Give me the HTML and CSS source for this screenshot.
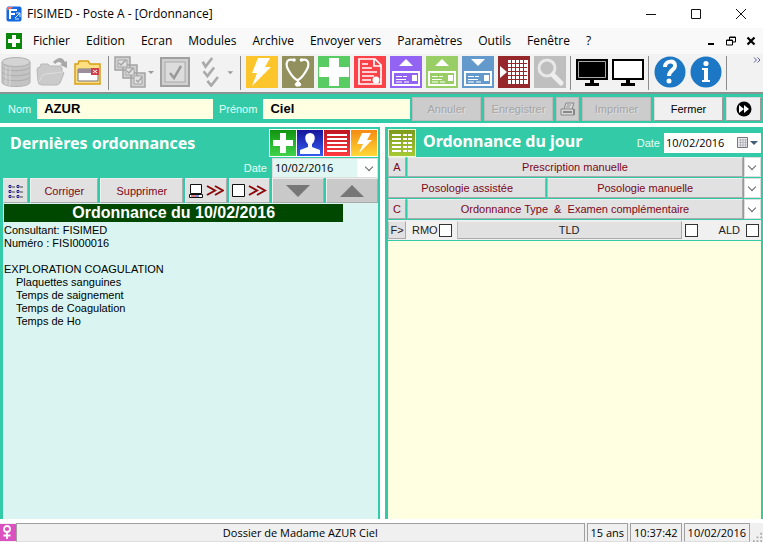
FILE: index.html
```html
<!DOCTYPE html>
<html lang="fr">
<head>
<meta charset="utf-8">
<title>FISIMED - Poste A - [Ordonnance]</title>
<link rel="stylesheet" href="styles.css">
</head>
<body>
<header class="titlebar">
  <svg class="app-icon" viewBox="0 0 16 16"><rect width="15" height="15" x=".5" y=".5" rx="2" fill="#1468e0"/><path d="M1 1h6L4 4H1z" fill="#ef6b6b"/><path d="M4 13V4h7M4 8h5" fill="none" stroke="#fff" stroke-width="2"/><path d="M9 12l5-5M10 7h4v4M9 13h4" fill="none" stroke="#d5e8ff"/></svg>
  <h1 class="window-title">FISIMED - Poste A - [Ordonnance]</h1>
  <div class="window-controls">
    <button aria-label="Réduire"><svg viewBox="0 0 12 12"><path d="M1 6.500h10"/></svg></button>
    <button aria-label="Agrandir"><svg viewBox="0 0 12 12"><path d="M1.500 1.500h9v9h-9z"/></svg></button>
    <button aria-label="Fermer la fenêtre"><svg viewBox="0 0 12 12"><path d="M1 1l10 10M11 1L1 11"/></svg></button>
  </div>
</header>
<nav class="menubar">
  <svg class="cross-icon" viewBox="0 0 16 16"><rect width="16" height="16" fill="#0b870b"/><path d="M6 2h4v4h4v4h-4v4H6v-4H2V6h4z" fill="#fff"/></svg>
  <button>Fichier</button><button>Edition</button><button>Ecran</button><button>Modules</button><button>Archive</button><button>Envoyer vers</button><button>Paramètres</button><button>Outils</button><button>Fenêtre</button><button>?</button>
  <div class="child-controls">
    <button aria-label="Réduire le document"><svg viewBox="0 0 10 10"><path d="M2 8h6" stroke-width="2"/></svg></button>
    <button aria-label="Restaurer le document"><svg viewBox="0 0 10 10"><path d="M3.500 4V1h6v5H7M3 1.500h7M.5 4h6v5h-6zM0 4.500h7"/></svg></button>
    <button aria-label="Fermer le document"><svg viewBox="0 0 10 10"><path d="M1.500 1.500l7 7M8.500 1.500l-7 7" stroke-width="2.200"/></svg></button>
  </div>
</nav>
<div class="toolbar" role="toolbar" aria-label="Outils">
  <button class="tool" aria-label="Base de données"><svg viewBox="0 0 32 32"><path d="M2 6v20c0 6 28 6 28 0V6" fill="#c4c4c4" stroke="#b0b0b0"/><ellipse cx="16" cy="6" rx="14" ry="4.500" fill="#d4d4d4" stroke="#b0b0b0"/><path d="M2 11c2 5 26 5 28 0M2 16c2 5 26 5 28 0M2 21c2 5 26 5 28 0" fill="none" stroke="#acacac"/><path d="M6 11v18M10 12v18" stroke="#dadada"/></svg></button>
  <button class="tool" aria-label="Ouvrir"><svg viewBox="0 0 32 32"><path d="M1 14q0-3 3-3l1-3h7l2 2h10q3 1 2 5l2 2-4 10q-1 2-4 2H6q-4 0-4-4z" fill="#cbcbcb" stroke="#b8b8b8"/><path d="M3 26q2-7 6-8l18-2" fill="none" stroke="#dedede"/><path d="M17 6q8-8 12 0l2-1v7l-7-3 2-1q-3-4-7 0z" fill="#a8a8a8"/></svg></button>
  <button class="tool" aria-label="Fermer le dossier"><svg viewBox="0 0 32 32"><path d="M3 28V8h3l1-3h9l2 3h10v20z" fill="#ffdf80" stroke="#d8a019" stroke-width="1.500"/><path d="M6 13h20v12H6z" fill="#fff" stroke="#777"/><path d="M6 13h13v4H6z" fill="#9d8c9c"/><path d="M19 12h8v7h-8z" fill="#d2404a"/><path d="M21 14l4 3M25 14l-4 3" stroke="#fff"/></svg></button>
  <span class="sep"></span>
  <button class="tool wide" aria-label="Sélection multiple"><svg viewBox="0 0 42 32"><g fill="#d1d1d1" stroke="#a4a4a4" stroke-width="1.500"><path d="M1 1h15v13H1zM9 9h14v13H9zM17 17h14v14H17z"/><path d="M4 4h9v7H4zM12 12h8v7h-8zM20 20h8v8h-8z" fill="#e2e2e2" stroke-width="1"/><path d="M5 7l2 2 5-5M13 15l2 2 4-5M22 24l2 2 4-5" fill="none"/></g><path d="M34 15h6l-3 3z" fill="#999"/></svg></button>
  <button class="tool" aria-label="Cocher"><svg viewBox="0 0 32 32"><rect x="1" y="2" width="28" height="28" fill="#d0d0d0" stroke="#a0a0a0" stroke-width="2"/><rect x="5" y="6" width="20" height="20" fill="#dcdcdc" stroke="#aaa"/><path d="M10 17l4 5 7-12" fill="none" stroke="#999" stroke-width="2.500"/></svg></button>
  <button class="tool wide" aria-label="Tout cocher"><svg viewBox="0 0 42 32"><path d="M7 5l3 5 7-9M8 15l4 5 7-9M12 25l4 5 7-9" fill="none" stroke="#aaa" stroke-width="2.800"/><path d="M33 15h6l-3 3z" fill="#999"/></svg></button>
  <span class="sep"></span>
  <button class="tool" aria-label="Urgence"><svg viewBox="0 0 32 32"><rect width="32" height="32" fill="#fdc52c"/><path d="M12 2h12l-5 9h6L6 30l5-13H6z" fill="#fff"/></svg></button>
  <button class="tool" aria-label="Consultation"><svg viewBox="0 0 32 32"><rect width="32" height="32" fill="#92915e"/><path d="M11 4C4 2 3 9 7 15q4 7 8 9h1q4-2 8-9c4-6 3-13-4-11M16 23v4" fill="none" stroke="#fff" stroke-width="2.200"/><circle cx="12" cy="4" r="1.800" fill="#fff"/><circle cx="19.500" cy="4" r="1.800" fill="#fff"/><path d="M16 25l3 3-1 2h-4l-1-2z" fill="#fff" stroke="#fff"/></svg></button>
  <button class="tool" aria-label="Nouveau dossier"><svg viewBox="0 0 32 32"><rect width="32" height="32" fill="#58cb63"/><path d="M11 2h10v9h10v10H21v9H11v-9H1V11h10z" fill="#fff"/></svg></button>
  <button class="tool" aria-label="Ordonnance"><svg viewBox="0 0 32 32"><rect width="32" height="32" fill="#fb4248"/><path d="M5 3h16l6 6v19H5zM20 3v7h7M8 8h6M8 12h10M8 16h15M8 20h12M8 24h9" fill="none" stroke="#fff" stroke-width="1.700"/><circle cx="22" cy="24" r="3.500" fill="#fff"/></svg></button>
  <button class="tool" aria-label="Carte haut"><svg viewBox="0 0 32 32"><rect width="32" height="32" fill="#9363f4"/><path d="M9 10l7-7 7 7z" fill="#fff"/><path d="M3 16h26v13H3z" fill="none" stroke="#fff" stroke-width="2"/><path d="M6 20.500h6m1 0h4M6 23.500h10M6 26h6m2 0h5" stroke="#fff" stroke-width="1.200"/><path d="M22 19h5v6h-5z" fill="#fff"/></svg></button>
  <button class="tool" aria-label="Carte verte"><svg viewBox="0 0 32 32"><rect width="32" height="32" fill="#99ce66"/><path d="M9 10l7-7 7 7z" fill="#fff"/><path d="M3 16h26v13H3z" fill="none" stroke="#fff" stroke-width="2"/><path d="M6 20.500h6m1 0h4M6 23.500h10M6 26h6m2 0h5" stroke="#fff" stroke-width="1.200"/><path d="M22 19h5v6h-5z" fill="#fff"/></svg></button>
  <button class="tool" aria-label="Carte bas"><svg viewBox="0 0 32 32"><rect width="32" height="32" fill="#639acb"/><path d="M9 3l7 7 7-7z" fill="#fff"/><path d="M3 16h26v13H3z" fill="none" stroke="#fff" stroke-width="2"/><path d="M6 20.500h6m1 0h4M6 23.500h10M6 26h6m2 0h5" stroke="#fff" stroke-width="1.200"/><path d="M22 19h5v6h-5z" fill="#fff"/></svg></button>
  <button class="tool" aria-label="Tableau"><svg viewBox="0 0 32 32"><rect width="32" height="32" fill="#96282b"/><path d="M2 10l7 6-7 6z" fill="#fff"/><path d="M10 4h20v24H10z" fill="#fff"/><path d="M13.500 4v24M17.500 4v24M21.500 4v24M25.500 4v24M10 7.500h19M10 11.500h19M10 15.500h19M10 19.500h19M10 23.500h19" stroke="#96282b"/></svg></button>
  <button class="tool" aria-label="Rechercher"><svg viewBox="0 0 32 32"><rect width="32" height="32" fill="#bfbfbf"/><circle cx="13" cy="12" r="8" fill="none" stroke="#e8e8e8" stroke-width="3"/><path d="M19 19l8 8" stroke="#eee" stroke-width="5" stroke-linecap="round"/></svg></button>
  <span class="sep"></span>
  <button class="tool" aria-label="Ecran noir"><svg viewBox="0 0 32 32"><path d="M0 3h32v21H0zM14 24h4v3h5v3H9v-3h5z"/><path d="M2.500 5.500h27v16h-27z" fill="none" stroke="#aaa"/></svg></button>
  <button class="tool" aria-label="Ecran blanc"><svg viewBox="0 0 32 32"><path d="M0 3h32v21H0zM14 24h4v3h5v3H9v-3h5z"/><path d="M2 5h28v17H2z" fill="#fff"/></svg></button>
  <span class="sep"></span>
  <button class="tool" aria-label="Aide"><svg viewBox="0 0 32 32"><circle cx="16" cy="16" r="15.500" fill="#1c77c4"/><path d="M11 11c0-7 11-7 10-1 0 4-6 4-6 10" fill="none" stroke="#fff" stroke-width="4"/><circle cx="15" cy="25" r="2.500" fill="#fff"/></svg></button>
  <button class="tool" aria-label="Informations"><svg viewBox="0 0 32 32"><circle cx="16" cy="16" r="15.500" fill="#1c77c4"/><circle cx="16" cy="7.500" r="2.600" fill="#fff"/><path d="M12 12h6v12h2v2h-8v-2h2V14h-2z" fill="#fff"/></svg></button>
  <span class="sep"></span>
  <button class="more" aria-label="Autres outils"><svg viewBox="0 0 8 6"><path d="M1 .5L3.500 3 1 5.500M4.500.5L7 3 4.500 5.500" fill="none" stroke="#5a5a9c"/></svg></button>
</div>

<form class="patient">
  <label for="nom">Nom</label><input id="nom" class="nom" value="AZUR">
  <label for="prenom">Prénom</label><input id="prenom" class="prenom" value="Ciel">
  <div class="actions">
    <button type="button" disabled>Annuler</button>
    <button type="button" disabled>Enregistrer</button>
    <button type="button" class="square" disabled aria-label="Aperçu"><svg viewBox="0 0 16 16"><path d="M1 8h13v6H1zM4 8l2-6h8l-2 6" fill="#d8d8d8" stroke="#888"/><path d="M3 11h9M14 8v6" stroke="#888" stroke-width="2"/><path d="M7 4h4M6 6h4" stroke="#999"/></svg></button>
    <button type="button" disabled>Imprimer</button>
    <button type="button">Fermer</button>
    <button type="button" class="next" aria-label="Suivant"><svg viewBox="0 0 16 16"><circle cx="8" cy="8" r="7.500"/><path d="M3 4l5 4-5 4zM8 4l5 4-5 4z" fill="#fff"/></svg></button>
  </div>
</form>

<main class="panels">
  <section class="panel">
    <div class="head">
      <h2>Dernières ordonnances</h2>
      <div class="quick">
        <button aria-label="Ajouter"><svg viewBox="0 0 26 26"><defs><linearGradient id="g1" x2="0" y2="1"><stop stop-color="#109410"/><stop offset="1" stop-color="#42d34b"/></linearGradient></defs><rect width="26" height="26" fill="url(#g1)"/><path d="M10 3h6v7h7v6h-7v7h-6v-7H3v-6h7z" fill="#fff"/></svg></button>
        <button aria-label="Patient"><svg viewBox="0 0 26 26"><defs><linearGradient id="g2" x2="0" y2="1"><stop stop-color="#15159b"/><stop offset="1" stop-color="#375df0"/></linearGradient></defs><rect width="26" height="26" fill="url(#g2)"/><path d="M13 3c7 0 5 9 2 11v3l8 3v4H3v-4l8-3v-3C8 12 6 3 13 3z" fill="#fff"/></svg></button>
        <button aria-label="Liste"><svg viewBox="0 0 26 26"><defs><linearGradient id="g3" x2="0" y2="1"><stop stop-color="#bd1520"/><stop offset="1" stop-color="#ff3b40"/></linearGradient></defs><rect width="26" height="26" fill="url(#g3)"/><path d="M3 5h20M3 9h20M3 13h20M3 17h20M3 21h20" stroke="#fff" stroke-width="2"/></svg></button>
        <button aria-label="Rapide"><svg viewBox="0 0 26 26"><defs><linearGradient id="g4" x2="0" y2="1"><stop stop-color="#f48b12"/><stop offset="1" stop-color="#ffd837"/></linearGradient></defs><rect width="26" height="26" fill="url(#g4)"/><path d="M11 3h9l-4 7h5L8 23l4-9H6z" fill="#fff"/></svg></button>
      </div>
    </div>
    <div class="date-row">
      <label for="date-prec">Date</label>
      <span class="drop date-drop"><select id="date-prec"><option>10/02/2016</option></select></span>
    </div>
    <div class="commands">
      <button class="c-list" aria-label="Options"><svg viewBox="0 0 16 14"><path d="M1 1.500h2v2H1zM9 1.500h2v2H9zM1 6.500h2v2H1zM9 6.500h2v2H9zM1 11.500h2v2H1zM9 11.500h2v2H9z" fill="none" stroke="#20208c"/><path d="M4 3h3M12 3h3M4 8h3M12 8h3M4 13h3M12 13h3" stroke="#444"/></svg></button>
      <button class="c-edit">Corriger</button>
      <button class="c-del">Supprimer</button>
      <button class="c-send" aria-label="Transférer vers le poste"><svg viewBox="0 0 36 16"><path d="M2.500 1.500h11v9h-11zM1.500 11.500h13v3h-13z" fill="#fff" stroke="#111"/><path d="M3 13h4" stroke="#c00"/><path d="M7 13h4" stroke="#22a"/><path d="M19 3l8 4.500-8 4.500M27 3l8 4.500-8 4.500" fill="none" stroke="#8b0c0c" stroke-width="2"/></svg></button>
      <button class="c-send" aria-label="Transférer"><svg viewBox="0 0 36 16"><path d="M1.500 1.500h12v12h-12z" fill="#fff" stroke="#111"/><path d="M18 3l8 4.500-8 4.500M26 3l8 4.500-8 4.500" fill="none" stroke="#8b0c0c" stroke-width="2"/></svg></button>
      <button class="c-move" aria-label="Descendre"><svg viewBox="0 0 24 12"><path d="M0 0h24L12 12z" fill="#777"/></svg></button>
      <button class="c-move" aria-label="Monter"><svg viewBox="0 0 24 12"><path d="M0 12h24L12 0z" fill="#777"/></svg></button>
    </div>
    <article class="document">
      <h3>Ordonnance du 10/02/2016</h3>
      <p>Consultant: FISIMED</p>
      <p>Numéro : FISI000016</p>
      <p class="exam">EXPLORATION COAGULATION</p>
      <ul><li>Plaquettes sanguines</li><li>Temps de saignement</li><li>Temps de Coagulation</li><li>Temps de Ho</li></ul>
    </article>
  </section>

  <section class="panel">
    <div class="head today">
      <button class="grid-btn" aria-label="Grille"><svg viewBox="0 0 28 28"><defs><linearGradient id="g5" x2="0" y2="1"><stop stop-color="#7d9b1c"/><stop offset="1" stop-color="#a6c935"/></linearGradient></defs><path d="M0 0h28v28H0z" fill="#f0f6d8"/><path d="M1 1h26v26H1z" fill="url(#g5)"/><path d="M4 6h9M4 10h9M4 14h9M4 18h9M4 22h9M15 6h4M15 10h4M15 14h4M15 18h4M15 22h4M20 6h4M20 10h4M20 14h4M20 18h4M20 22h4" stroke="#fff" stroke-width="2"/></svg></button>
      <h2>Ordonnance du jour</h2>
      <label for="date-jour">Date</label>
      <div class="picker"><input id="date-jour" value="10/02/2016"><button aria-label="Calendrier"><svg viewBox="0 0 24 14"><path d="M.5 1.500h10v10H.5z" fill="#e8e8f0" stroke="#777"/><path d="M2 4h8M2 6.500h8M2 9h8M3.500 3v8M6 3v8M8.500 3v8" stroke="#aaa" stroke-width=".7"/><path d="M13 5h8l-4 4z" fill="#445e78"/></svg></button></div>
    </div>
    <div class="rows">
      <div class="row"><button class="letter">A</button><button class="grow">Prescription manuelle</button><span class="drop"><select aria-label="Prescriptions"><option value=""></option></select></span></div>
      <div class="row"><button class="posology">Posologie assistée</button><button class="grow">Posologie manuelle</button><span class="drop"><select aria-label="Posologies"><option value=""></option></select></span></div>
      <div class="row"><button class="letter">C</button><button class="grow">Ordonnance Type &nbsp;&amp;&nbsp; Examen complémentaire</button><span class="drop"><select aria-label="Ordonnances types"><option value=""></option></select></span></div>
      <div class="row checks">
        <button class="letter dark">F&gt;</button>
        <label for="rmo">RMO</label><input type="checkbox" id="rmo">
        <button class="grow dark">TLD</button><input type="checkbox" id="tld" aria-label="TLD">
        <label for="ald" class="ald">ALD</label><input type="checkbox" id="ald">
      </div>
    </div>
    <textarea class="editor" aria-label="Contenu de l'ordonnance"></textarea>
  </section>
</main>

<footer class="status">
  <svg class="gender" viewBox="0 0 16 17"><rect width="16" height="17" fill="#dc51c0"/><circle cx="7" cy="5" r="3" fill="none" stroke="#fff" stroke-width="1.800"/><path d="M7 8v7M3.500 11.500h7" stroke="#fff" stroke-width="1.800"/></svg>
  <span class="cell file">Dossier de Madame AZUR Ciel</span>
  <span class="cell">15 ans</span>
  <span class="cell">10:37:42</span>
  <span class="cell">10/02/2016</span>
  <svg class="grip" viewBox="0 0 12 12"><path d="M9 2h2v2H9zM5 6h2v2H5zM9 6h2v2H9zM1 10h2v2H1zM5 10h2v2H5zM9 10h2v2H9z" fill="#aaa"/></svg>
</footer>
</body>
</html>
```
FILE: styles.css
```css
:root {
  --teal: #33cba7;
  --face: #e1e1e1;
  --disabled: #cccccc;
  --maroon: #7b0820;
  --ui: "Open Sans", "Noto Sans", sans-serif;
  --form: "Liberation Sans", Arial, sans-serif;
}
* { box-sizing: border-box; }
body {
  margin: 0;
  min-height: 100vh;
  display: flex;
  flex-direction: column;
  background: #fff;
  color: #000;
  font: 12px/16px var(--ui);
}
h1, h2, h3, p, ul { margin: 0; padding: 0; list-style: none; }
button, input, select, textarea { font: inherit; color: inherit; margin: 0; border-radius: 0; }
button { padding: 0; border: 0; background: none; white-space: nowrap; }
svg { display: block; }

.titlebar { display: flex; align-items: center; height: 28px; padding-left: 6px; gap: 5px; }
.app-icon { width: 16px; height: 16px; }
.window-title { font-size: 12px; font-weight: 400; }
.window-controls { display: flex; margin-left: auto; }
.window-controls button { width: 45px; display: grid; place-items: center; }
.window-controls svg { width: 12px; fill: none; stroke: #111; }

.menubar { display: flex; align-items: center; height: 26px; gap: 16px; padding: 0 2px 0 6px; background: #f9f9f9; }
.cross-icon { width: 16px; height: 16px; margin-right: -5px; }
.child-controls { display: flex; margin-left: auto; }
.child-controls button { width: 20px; display: grid; place-items: center; }
.child-controls svg { width: 10px; fill: none; stroke: #000; }

.toolbar { display: flex; gap: 4px; height: 40px; padding-top: 2px; background: #f2f2f2; border-bottom: 2px solid #8a9390; overflow: hidden; }
.tool { width: 32px; height: 32px; flex: none; }
.tool.wide { width: 42px; }
.tool.wide:nth-of-type(6) { width: 40px; }
.sep { width: 2px; height: 34px; flex: none; border-left: 1px solid #8c8c8c; }
.more { margin-left: auto; width: 10px; height: 8px; }
.more svg { width: 8px; }

.patient { display: flex; align-items: center; gap: 6px; height: 29px; padding: 0 2px 0 8px; background: var(--teal); font: 11px/14px var(--form); }
.patient label, .date-row label, .today label { color: #e6fff6; font: 11px/14px var(--form); }
.patient input { height: 20px; min-width: 0; border: 0; padding: 0 7px; background: #ffffe1; font: bold 13px/16px var(--form); }
.nom { flex: 178 1 0; }
.prenom { flex: 146 1 0; }
.actions { display: flex; gap: 3px; margin-left: -4px; }
.actions button { width: 69px; height: 24px; background: #f0f0f0; border: 1px solid #d8d8d8; border-right-color: #999; border-bottom-color: #999; display: grid; place-items: center; }
.actions button:disabled { background: var(--disabled); color: #a5a5a5; border-color: #bababa; text-shadow: 1px 1px #dedede; }
.actions button.square { width: 23px; }
.actions button.next { width: 35px; }
.actions svg { width: 16px; }

.panels { flex: 1; display: grid; grid-template-columns: 380fr 378fr; gap: 5px; border: solid #fff; border-width: 4px 0; }
.panel { display: flex; flex-direction: column; min-width: 0; padding: 0 2px 0 3px; background: var(--teal); }
.head { display: flex; align-items: center; justify-content: space-between; height: 30px; padding: 2px 0 0 7px; }
.head h2 { color: #fff; font: bold 16px/20px "Noto Sans", "Open Sans", sans-serif; white-space: nowrap; }
.quick { display: flex; border: 1px solid #fff; background: #fff; gap: 1px; }
.quick button { width: 26px; height: 26px; }
.date-row { display: flex; justify-content: flex-end; align-items: center; gap: 5px; height: 21px; }
.drop { position: relative; display: block; background: #fff; flex: none; width: 17px; height: 20px; }
.drop::after { content: ""; position: absolute; right: 6px; top: 6px; width: 5px; height: 5px; border: solid #666; border-width: 0 1px 1px 0; transform: rotate(45deg); pointer-events: none; }
.drop select { appearance: none; display: block; width: 100%; height: 100%; border: 1px solid #ddd; background: transparent; padding: 0 2px; font-size: 11px; }
.date-drop { width: 106px; background: linear-gradient(90deg, #dff6f2 80%, #fff 80%); }
.commands { display: flex; gap: 2px; height: 25px; font: 11px/14px var(--form); color: var(--maroon); }
.commands button { display: grid; place-items: center; background: var(--face); border: 1px solid #eee; border-color: #eee #aaa #aaa #eee; }
.c-list { flex: 24 1 0; }
.c-edit { flex: 69 1 0; }
.c-del { flex: 84 1 0; }
.c-send { flex: 41 1 0; }
.commands .c-move { flex: 52 1 0; background: #c9c9c9; }
.c-list svg { width: 16px; }
.c-send svg { width: 36px; }
.c-move svg { width: 24px; }
.document { flex: 1; padding: 1px 1px 0; background: #daf5f1; font: 11px/13px var(--form); }
.document h3 { width: 91%; margin-bottom: 2px; background: #004700; color: #fff; font: bold 16px/18px var(--form); text-align: center; }
.exam { margin-top: 13px; }
.document ul { padding-left: 12px; }

.today { padding: 2px 0 0; gap: 7px; }
.grid-btn { width: 28px; height: 28px; }
.today h2 { margin: 0 auto 4px 0; }
.today label { margin-right: -3px; }
.picker { display: flex; width: 97px; height: 20px; background: #fff; align-items: center; }
.picker input { flex: 1; min-width: 0; border: 0; padding: 0 2px; background: none; font-size: 11px; }
.picker button, .picker svg { width: 24px; }
.rows { display: grid; gap: 1px; }
.row { display: flex; gap: 1px; height: 20px; font: 11px/14px var(--form); color: var(--maroon); }
.row button { background: var(--face); border: 1px solid #c4c4c4; border-color: #eee #aaa #aaa #bbb; }
.row .letter { width: 18px; }
.row .posology { flex: 159 1 0; }
.row .grow { flex: 197 1 0; }
.row .dark { color: #222; }
.checks { align-items: center; background: #f0f0f0; color: #222; }
.checks button { height: 18px; }
.checks label { margin-left: 5px; }
.checks .ald { margin-left: 18px; margin-right: 5px; }
.checks input { appearance: none; width: 13px; height: 13px; margin: 0 2px 0 0; background: #fff; border: 1px solid #333; }
.checks input:checked { background: #333; }
.checks .grow { margin-left: 2px; margin-right: 2px; }
.editor { flex: 1; display: block; width: 100%; margin-top: 1px; border: 0; resize: none; background: #ffffe1; outline: 0; }

.status { display: flex; gap: 2px; height: 19px; background: #f0f0f0; align-items: stretch; font-size: 11px; }
.gender { width: 16px; height: 19px; margin-right: -2px; }
.cell { border: 1px solid #a0a0a0; border-bottom-color: #ddd; padding: 1px 3px; }
.file { flex: 1; text-align: center; }
.grip { width: 11px; align-self: flex-end; }
```
